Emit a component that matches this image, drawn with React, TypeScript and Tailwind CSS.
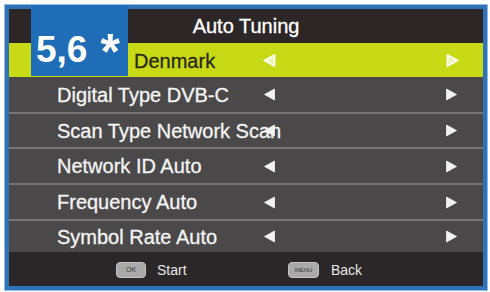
import React from "react";

const LeftArrow = ({ hl = false }: { hl?: boolean }) => (
  <svg width="13" height="13" viewBox="0 0 13 13" className="shrink-0">
    <polygon
      points="11.5,1 1.5,6.5 11.5,12"
      fill={hl ? "#eef4b0" : "#f2f2f2"}
      stroke={hl ? "#ffffff" : "#f2f2f2"}
      strokeWidth={hl ? 1.8 : 0.8}
      strokeLinejoin="round"
    />
  </svg>
);

const RightArrow = ({ hl = false }: { hl?: boolean }) => (
  <svg width="13" height="13" viewBox="0 0 13 13" className="shrink-0">
    <polygon
      points="1.5,1 11.5,6.5 1.5,12"
      fill={hl ? "#eef4b0" : "#f2f2f2"}
      stroke={hl ? "#ffffff" : "#f2f2f2"}
      strokeWidth={hl ? 1.8 : 0.8}
      strokeLinejoin="round"
    />
  </svg>
);

const rows = [
  { label: "Digital Type DVB-C", h: "h-[35px]", sep: false },
  { label: "Scan Type Network Scan", h: "h-[35px]", sep: true },
  { label: "Network ID Auto", h: "h-[36px]", sep: true },
  { label: "Frequency Auto", h: "h-[36px]", sep: true },
  { label: "Symbol Rate Auto", h: "h-[33px]", sep: true },
];

export default function App() {
  return (
    <div
      className="w-[490px] h-[292px] bg-white pt-[5px] pl-[5px]"
      style={{ fontFamily: '"Liberation Sans", Arial, sans-serif' }}
    >
      <div className="relative w-[482px] h-[285px] border-4 border-[#2f73b6] bg-[#4a4848] flex flex-col shadow-[0_0_0_1px_#8fbde6]">
        {/* header */}
        <div className="h-[34px] bg-[#2d2627] flex items-center justify-center text-[20px] text-white [-webkit-text-stroke:0.3px_#ffffff]">
          Auto Tuning
        </div>
        {/* highlighted row */}
        <div className="h-[34px] bg-[#c8da16] flex items-center">
          <span className="w-[254px] pl-[125px] text-[20px] leading-none text-[#2a2a14] pt-[2px] [-webkit-text-stroke:0.3px_#2a2a14]">
            Denmark
          </span>
          <LeftArrow hl />
          <div className="flex-1" />
          <RightArrow hl />
          <div className="w-[24px]" />
        </div>
        {rows.map((r) => (
          <div
            key={r.label}
            className={`${r.h} flex items-center ${
              r.sep ? "border-t-2 border-[#777474]" : ""
            }`}
          >
            <span className="w-[254px] pl-[48px] text-[20px] leading-none text-[#f4f4f4] whitespace-nowrap [-webkit-text-stroke:0.3px_#f4f4f4]">
              {r.label}
            </span>
            <LeftArrow />
            <div className="flex-1" />
            <RightArrow />
            <div className="w-[25px]" />
          </div>
        ))}
        {/* footer */}
        <div className="flex-1 bg-[#2b2627] flex items-center pl-[107px] pt-[2px] text-[14px] text-[#e8e8e8]">
          <span className="w-[30px] h-[16px] rounded-[4px] bg-[#a9a9a9] border border-[#c4c4c4] flex items-center justify-center text-[7px] text-[#3a3a3a]">
            OK
          </span>
          <span className="ml-[11px] w-[131px]">Start</span>
          <span className="w-[31px] h-[16px] rounded-[4px] bg-[#a9a9a9] border border-[#c4c4c4] flex items-center justify-center text-[6px] text-[#3a3a3a]">
            MENU
          </span>
          <span className="ml-[12px]">Back</span>
        </div>
        {/* badge */}
        <div className="absolute left-[22px] top-[-4px] w-[97px] h-[71px] bg-[#1f6db6] flex items-start pl-[5px] pt-[26px]">
          <span className="text-[37px] font-bold text-white leading-none">5,6</span>
          <span className="ml-[13px] mt-[-4px] text-[50px] font-bold text-white leading-none">*</span>
        </div>
      </div>
    </div>
  );
}
